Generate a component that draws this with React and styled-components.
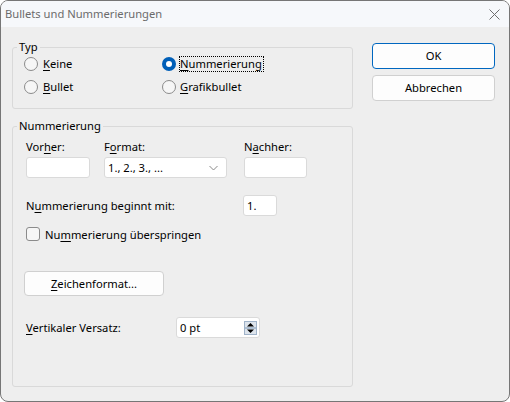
import React from 'react';
import styled, { createGlobalStyle } from 'styled-components';

const Global = createGlobalStyle`
  html, body { margin: 0; padding: 0; background: #ffffff; }
  body {
    font-family: "Segoe UI", "Noto Sans", "DejaVu Sans", sans-serif;
    font-size: 11.2px;
    color: #000;
  }
  * { box-sizing: border-box; }
`;

const Window = styled.div`
  width: 510px;
  height: 402px;
  border: 1px solid #767676;
  border-radius: 8px;
  overflow: hidden;
  display: flex;
  flex-direction: column;
  background: #eeeeee;
`;

const TitleBar = styled.div`
  height: 26px;
  flex: none;
  background: #f6f8fb;
  display: flex;
  align-items: center;
  justify-content: space-between;
  padding: 0 9px 0 4px;
  color: #6b6b6b;
  line-height: 16px;
`;

const Body = styled.div`
  flex: 1;
  min-height: 0;
  display: flex;
  gap: 19px;
  padding: 13px 14px 14px 11px;
`;

const LeftCol = styled.div`
  width: 341px;
  display: flex;
  flex-direction: column;
  gap: 10px;
`;

const RightCol = styled.div`
  width: 123px;
  display: flex;
  flex-direction: column;
  gap: 6px;
  padding-top: 3px;
`;

const Group = styled.fieldset`
  margin: 0;
  padding: 0;
  min-width: 0;
  border: 1px solid #d9d9d9;
  border-radius: 3px;
  ${p => (p.$grow ? 'flex: 1;' : '')}
`;

const Legend = styled.legend`
  margin-left: 4px;
  padding: 0 2px;
  line-height: 14px;
  font-size: inherit;
`;

const TypGrid = styled.div`
  display: grid;
  grid-template-columns: 138px auto;
  grid-auto-rows: 18px;
  row-gap: 5px;
  padding: 1px 0 12px 11px;
`;

const Choice = styled.div`
  display: flex;
  align-items: center;
  gap: ${p => p.$gap}px;
`;

const RadioCircle = styled.span`
  width: 14px;
  height: 14px;
  flex: none;
  border-radius: 50%;
  display: flex;
  align-items: center;
  justify-content: center;
  ${p =>
    p.$checked
      ? 'background: #005fb8; border: none;'
      : 'background: #f6f6f6; border: 1px solid #8b8b8b;'}
`;

const RadioDot = styled.span`
  width: 6px;
  height: 6px;
  border-radius: 50%;
  background: #ffffff;
`;

const ChoiceText = styled.span`
  border: 1px ${p => (p.$focus ? 'dotted #000' : 'solid transparent')};
  line-height: 13px;
  padding: 0 1px 1px 0;
  white-space: nowrap;
`;

const Key = styled.u`
  text-decoration: underline;
  text-underline-offset: 2px;
  text-decoration-thickness: 1px;
`;

const NumBody = styled.div`
  display: flex;
  flex-direction: column;
  align-items: flex-start;
  padding: 6px 0 0 13px;
`;

const FieldsRow = styled.div`
  display: grid;
  grid-template-columns: 78px 140px 63px;
`;

const Field = styled.div`
  display: flex;
  flex-direction: column;
`;

const FieldLabel = styled.div`
  line-height: 16px;
  margin-bottom: 2px;
  white-space: nowrap;
`;

const TextBox = styled.div`
  width: ${p => p.$w}px;
  height: 21px;
  background: #ffffff;
  border: 1px solid #dadada;
  border-radius: 3px;
  display: flex;
  align-items: center;
  padding: 0 2px 0 ${p => p.$pad ?? 2}px;
  line-height: 16px;
  white-space: nowrap;
`;

const BoxValue = styled.span`
  flex: 1;
`;

const LabeledRow = styled.div`
  display: grid;
  grid-template-columns: ${p => p.$label}px auto;
  align-items: center;
  margin-top: ${p => p.$top}px;
  white-space: nowrap;
`;

const CheckRow = styled.label`
  display: flex;
  align-items: center;
  gap: 5px;
  height: 16px;
  margin-top: 10px;
  white-space: nowrap;
`;

const CheckBox = styled.span`
  width: 14px;
  height: 14px;
  border: 1px solid #8b8b8b;
  border-radius: 3px;
  background: #f6f6f6;
`;

const Button = styled.button`
  font: inherit;
  color: #000;
  width: ${p => p.$w}px;
  height: ${p => p.$h}px;
  margin: ${p => p.$margin || '0'};
  background: #fdfdfd;
  border: 1px solid ${p => (p.$default ? '#0067c0' : '#d0d0d0')};
  border-radius: 4px;
  padding: 0;
  line-height: 16px;
  cursor: default;
`;

const SpinBox = styled.svg`
  flex: none;
  display: block;
`;

const CloseIcon = styled.svg`
  display: block;
`;

function Spin() {
  return (
    <SpinBox width="13" height="14" viewBox="0 0 13 14">
      <rect x="0.5" y="0.5" width="12" height="13" fill="#dde4ec" stroke="#9fb2c8" />
      <line x1="1" y1="7" x2="12" y2="7" stroke="#7f9ab8" />
      <path d="M3 5.5 L6.5 2 L10 5.5 Z" fill="#000" />
      <path d="M3 8.5 L10 8.5 L6.5 12 Z" fill="#000" />
    </SpinBox>
  );
}

function Chevron() {
  return (
    <svg width="9" height="6" viewBox="0 0 9 6" style={{ display: 'block', marginRight: 6 }}>
      <path d="M0.5 1 L4.5 5 L8.5 1" fill="none" stroke="#8a8a8a" strokeWidth="1" />
    </svg>
  );
}

export default function App() {
  return (
    <>
      <Global />
      <Window>
        <TitleBar>
          <span>Bullets und Nummerierungen</span>
          <CloseIcon width="11" height="11" viewBox="0 0 11 11">
            <path d="M0.5 0.5 L10.5 10.5 M10.5 0.5 L0.5 10.5" stroke="#6e6e6e" strokeWidth="1" />
          </CloseIcon>
        </TitleBar>
        <Body>
          <LeftCol>
            <Group>
              <Legend>Typ</Legend>
              <TypGrid>
                <Choice $gap={4}>
                  <RadioCircle />
                  <ChoiceText><Key>K</Key>eine</ChoiceText>
                </Choice>
                <Choice $gap={3}>
                  <RadioCircle $checked><RadioDot /></RadioCircle>
                  <ChoiceText $focus><Key>N</Key>ummerierung</ChoiceText>
                </Choice>
                <Choice $gap={4}>
                  <RadioCircle />
                  <ChoiceText><Key>B</Key>ullet</ChoiceText>
                </Choice>
                <Choice $gap={3}>
                  <RadioCircle />
                  <ChoiceText><Key>G</Key>rafikbullet</ChoiceText>
                </Choice>
              </TypGrid>
            </Group>
            <Group $grow>
              <Legend>Nummerierung</Legend>
              <NumBody>
                <FieldsRow>
                  <Field>
                    <FieldLabel>Vor<Key>h</Key>er:</FieldLabel>
                    <TextBox $w={64} />
                  </Field>
                  <Field>
                    <FieldLabel>F<Key>o</Key>rmat:</FieldLabel>
                    <TextBox $w={123} $pad={3}>
                      <BoxValue>1., 2., 3., ...</BoxValue>
                      <Chevron />
                    </TextBox>
                  </Field>
                  <Field>
                    <FieldLabel>N<Key>a</Key>chher:</FieldLabel>
                    <TextBox $w={63} />
                  </Field>
                </FieldsRow>
                <LabeledRow $label={217} $top={17}>
                  <span>N<Key>u</Key>mmerierung beginnt mit:</span>
                  <TextBox $w={34} $pad={3}>1.</TextBox>
                </LabeledRow>
                <CheckRow>
                  <CheckBox />
                  <span>Nu<Key>m</Key>merierung überspringen</span>
                </CheckRow>
                <Button $w={140} $h={25} $margin="29px 0 0 -2px">
                  <Key>Z</Key>eichenformat...
                </Button>
                <LabeledRow $label={150} $top={21}>
                  <span><Key>V</Key>ertikaler Versatz:</span>
                  <TextBox $w={84} $pad={3}>
                    <BoxValue>0 pt</BoxValue>
                    <Spin />
                  </TextBox>
                </LabeledRow>
              </NumBody>
            </Group>
          </LeftCol>
          <RightCol>
            <Button $w={123} $h={26} $default>OK</Button>
            <Button $w={123} $h={26}>Abbrechen</Button>
          </RightCol>
        </Body>
      </Window>
    </>
  );
}
